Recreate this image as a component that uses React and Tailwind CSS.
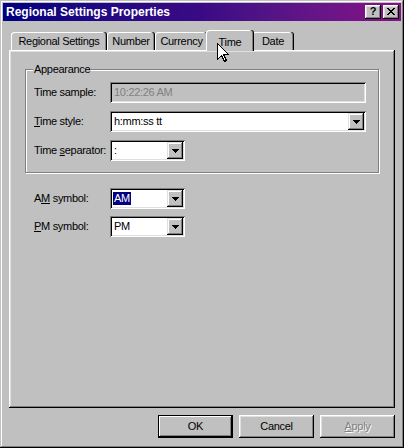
import React from "react";

const font = { fontFamily: '"Liberation Sans", Arial, sans-serif' };

function U({ children }) {
  return <span className="underline underline-offset-[1px]">{children}</span>;
}

function DropBtn() {
  return (
    <div className="w-[16px] h-full bg-[#c0c0c0] flex items-center justify-center shadow-[inset_-1px_-1px_#000,inset_1px_1px_#dfdfdf,inset_-2px_-2px_#808080,inset_2px_2px_#fff]">
      <svg width="7" height="4" viewBox="0 0 7 4" className="mt-[1px]">
        <path d="M0 0h7v1h-1v1h-1v1h-1v1h-1v-1h-1v-1h-1v-1h-1z" fill="#000" />
      </svg>
    </div>
  );
}

function Sunken({ className = "", children }) {
  return (
    <div
      className={
        "h-[21px] p-[2px] flex items-stretch shadow-[inset_1px_1px_#808080,inset_-1px_-1px_#fff,inset_2px_2px_#000,inset_-2px_-2px_#dfdfdf] " +
        className
      }
    >
      {children}
    </div>
  );
}

function Combo({ width, children }) {
  return (
    <Sunken className={"bg-white " + width}>
      <div className="flex-1 flex items-center pl-[2px] text-black">{children}</div>
      <DropBtn />
    </Sunken>
  );
}

function Tab({ w, children, selected }) {
  if (selected) {
    return (
      <div
        className={
          "relative z-10 h-[21px] -mb-[1px] -mx-[2px] bg-[#c0c0c0] rounded-t-[3px] flex items-start justify-center pt-[4px] shadow-[inset_-1px_0_#000,inset_-2px_0_#808080,inset_1px_1px_#fff] " +
          w
        }
      >
        {children}
      </div>
    );
  }
  return (
    <div
      className={
        "h-[18px] bg-[#c0c0c0] rounded-t-[3px] flex items-center justify-center pt-[1px] shadow-[inset_-1px_0_#000,inset_-2px_0_#808080,inset_1px_1px_#fff] " +
        w
      }
    >
      {children}
    </div>
  );
}

export default function App() {
  return (
    <div
      className="relative w-[404px] h-[448px] bg-[#c0c0c0] p-[3px] flex flex-col text-[11px] tracking-[-0.3px] text-black shadow-[inset_-1px_-1px_#000,inset_1px_1px_#c0c0c0,inset_-2px_-2px_#808080,inset_2px_2px_#fff]"
      style={font}
    >
      {/* Title bar */}
      <div className="h-[18px] flex items-center bg-gradient-to-r from-[#000080] via-[#3a0a85] to-[#880d88] pl-[3px] pr-[2px]">
        <div className="flex-1 text-white font-bold text-[12px] tracking-[0px] leading-none">
          Regional Settings Properties
        </div>
        <div className="flex gap-[2px]">
          <div className="w-[16px] h-[14px] bg-[#c0c0c0] flex items-center justify-center font-bold text-[11px] leading-none shadow-[inset_-1px_-1px_#000,inset_1px_1px_#fff,inset_-2px_-2px_#808080,inset_2px_2px_#dfdfdf]">
            <span className="-mt-[1px] tracking-[0px]">?</span>
          </div>
          <div className="w-[16px] h-[14px] bg-[#c0c0c0] flex items-center justify-center shadow-[inset_-1px_-1px_#000,inset_1px_1px_#fff,inset_-2px_-2px_#808080,inset_2px_2px_#dfdfdf]">
            <svg width="8" height="7" viewBox="0 0 8 7" className="-mt-[1px]" shapeRendering="crispEdges">
              <path
                d="M0 0h2v1h1v1h2v-1h1v-1h2v1h-1v1h-1v1h-1v1h1v1h1v1h1v1h-2v-1h-1v-1h-2v1h-1v1h-2v-1h1v-1h1v-1h1v-1h-1v-1h-1v-1h-1z"
                fill="#000"
              />
            </svg>
          </div>
        </div>
      </div>

      {/* Body */}
      <div className="flex-1 flex flex-col px-[6px] pt-[9px]">
        {/* Tabs */}
        <div className="h-[20px] flex items-end pl-[2px]">
          <Tab w="w-[96px]">Regional Settings</Tab>
          <Tab w="w-[48px]">Number</Tab>
          <Tab w="w-[53px]">Currency</Tab>
          <Tab w="w-[48px]" selected>
            Time
          </Tab>
          <Tab w="w-[42px]">Date</Tab>
        </div>

        {/* Panel */}
        <div className="h-[358px] flex flex-col shadow-[inset_-1px_-1px_#000,inset_1px_1px_#fff,inset_-2px_-2px_#808080,inset_2px_2px_#dfdfdf]">
          {/* Group box */}
          <div className="relative ml-[16px] mt-[19px] w-[354px] h-[104px] border border-[#808080] shadow-[1px_1px_0_#fff,inset_1px_1px_0_#fff] pl-[8px] pt-[12px] flex flex-col gap-[8px]">
            <span className="absolute left-[7px] -top-[8px] bg-[#c0c0c0] px-[1px] leading-[14px]">
              Appearance
            </span>
            <div className="flex items-center">
              <div className="w-[76px]">Time sample:</div>
              <Sunken className="w-[256px] bg-[#c0c0c0]">
                <div className="flex items-center pl-[2px] text-[#808080]">10:22:26 AM</div>
              </Sunken>
            </div>
            <div className="flex items-center">
              <div className="w-[76px]">
                <U>T</U>ime style:
              </div>
              <Combo width="w-[256px]">h:mm:ss tt</Combo>
            </div>
            <div className="flex items-center">
              <div className="w-[76px]">
                Time <U>s</U>eparator:
              </div>
              <Combo width="w-[75px]">:</Combo>
            </div>
          </div>

          {/* AM / PM */}
          <div className="ml-[25px] mt-[15px] flex flex-col gap-[7px]">
            <div className="flex items-center">
              <div className="w-[76px]">
                A<U>M</U> symbol:
              </div>
              <Combo width="w-[75px]">
                <span className="bg-[#000080] text-white px-[1px] leading-[13px] -ml-[1px]">AM</span>
              </Combo>
            </div>
            <div className="flex items-center">
              <div className="w-[76px]">
                <U>P</U>M symbol:
              </div>
              <Combo width="w-[75px]">PM</Combo>
            </div>
          </div>
        </div>

        {/* Buttons */}
        <div className="mt-[7px] flex justify-end gap-[6px]">
          <div className="w-[75px] h-[23px] border border-black bg-[#c0c0c0] flex items-center justify-center shadow-[inset_-1px_-1px_#000,inset_1px_1px_#fff,inset_-2px_-2px_#808080]">
            OK
          </div>
          <div className="w-[75px] h-[23px] bg-[#c0c0c0] flex items-center justify-center shadow-[inset_-1px_-1px_#000,inset_1px_1px_#fff,inset_-2px_-2px_#808080,inset_2px_2px_#dfdfdf]">
            Cancel
          </div>
          <div className="w-[75px] h-[23px] bg-[#c0c0c0] flex items-center justify-center text-[#808080] [text-shadow:1px_1px_0_#fff] shadow-[inset_-1px_-1px_#000,inset_1px_1px_#fff,inset_-2px_-2px_#808080,inset_2px_2px_#dfdfdf]">
            <span>
              <U>A</U>pply
            </span>
          </div>
        </div>
      </div>

      {/* Mouse cursor */}
      <svg
        className="absolute left-[217px] top-[43px] z-20"
        width="12"
        height="19"
        viewBox="0 0 12 19"
        shapeRendering="crispEdges"
      >
        <path
          d="M0.5 0.5 L0.5 16.5 L4.5 12.5 L7.5 18.5 L9.5 17.5 L6.5 11.5 L11.5 11.5 Z"
          fill="#fff"
          stroke="#000"
          strokeWidth="1"
        />
      </svg>
    </div>
  );
}
